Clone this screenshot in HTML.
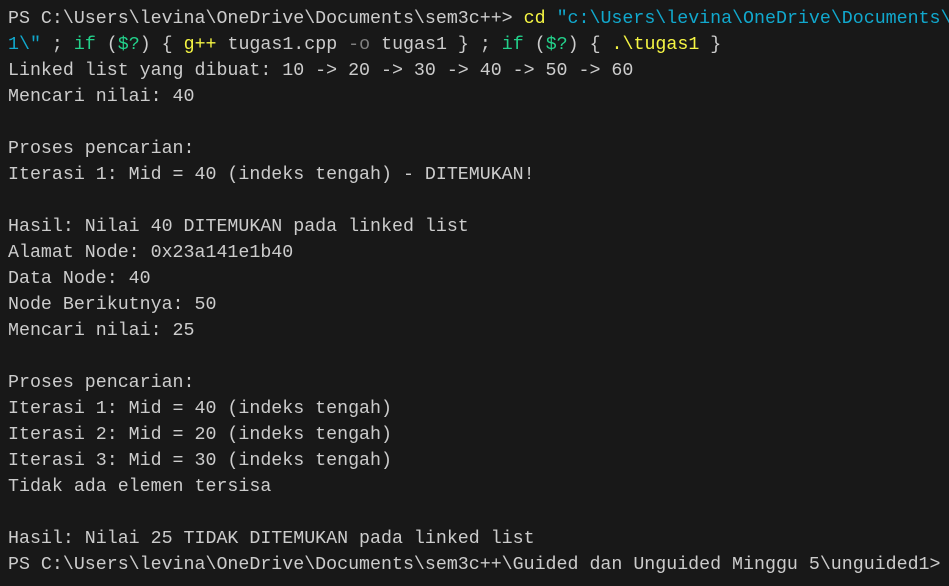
<!DOCTYPE html>
<html><head><style>
html,body{margin:0;padding:0;background:#181818;width:949px;height:586px;overflow:hidden}
pre{margin:0;padding:6px 0 0 8px;font-family:"Liberation Mono",monospace;font-size:18.3px;line-height:26px;color:#cccccc;white-space:pre}
.y{color:#f5f543}.c{color:#11a8cd}.g{color:#23d18b}.d{color:#808080}
</style></head><body><pre>PS C:\Users\levina\OneDrive\Documents\sem3c++&gt; <span class="y">cd</span> <span class="c">"c:\Users\levina\OneDrive\Documents\</span>
<span class="c">1\"</span> ; <span class="g">if</span> (<span class="g">$?</span>) { <span class="y">g++</span> tugas1.cpp <span class="d">-o</span> tugas1 } ; <span class="g">if</span> (<span class="g">$?</span>) { <span class="y">.\tugas1</span> }
Linked list yang dibuat: 10 -&gt; 20 -&gt; 30 -&gt; 40 -&gt; 50 -&gt; 60
Mencari nilai: 40

Proses pencarian:
Iterasi 1: Mid = 40 (indeks tengah) - DITEMUKAN!

Hasil: Nilai 40 DITEMUKAN pada linked list
Alamat Node: 0x23a141e1b40
Data Node: 40
Node Berikutnya: 50
Mencari nilai: 25

Proses pencarian:
Iterasi 1: Mid = 40 (indeks tengah)
Iterasi 2: Mid = 20 (indeks tengah)
Iterasi 3: Mid = 30 (indeks tengah)
Tidak ada elemen tersisa

Hasil: Nilai 25 TIDAK DITEMUKAN pada linked list
PS C:\Users\levina\OneDrive\Documents\sem3c++\Guided dan Unguided Minggu 5\unguided1&gt;</pre></body></html>
